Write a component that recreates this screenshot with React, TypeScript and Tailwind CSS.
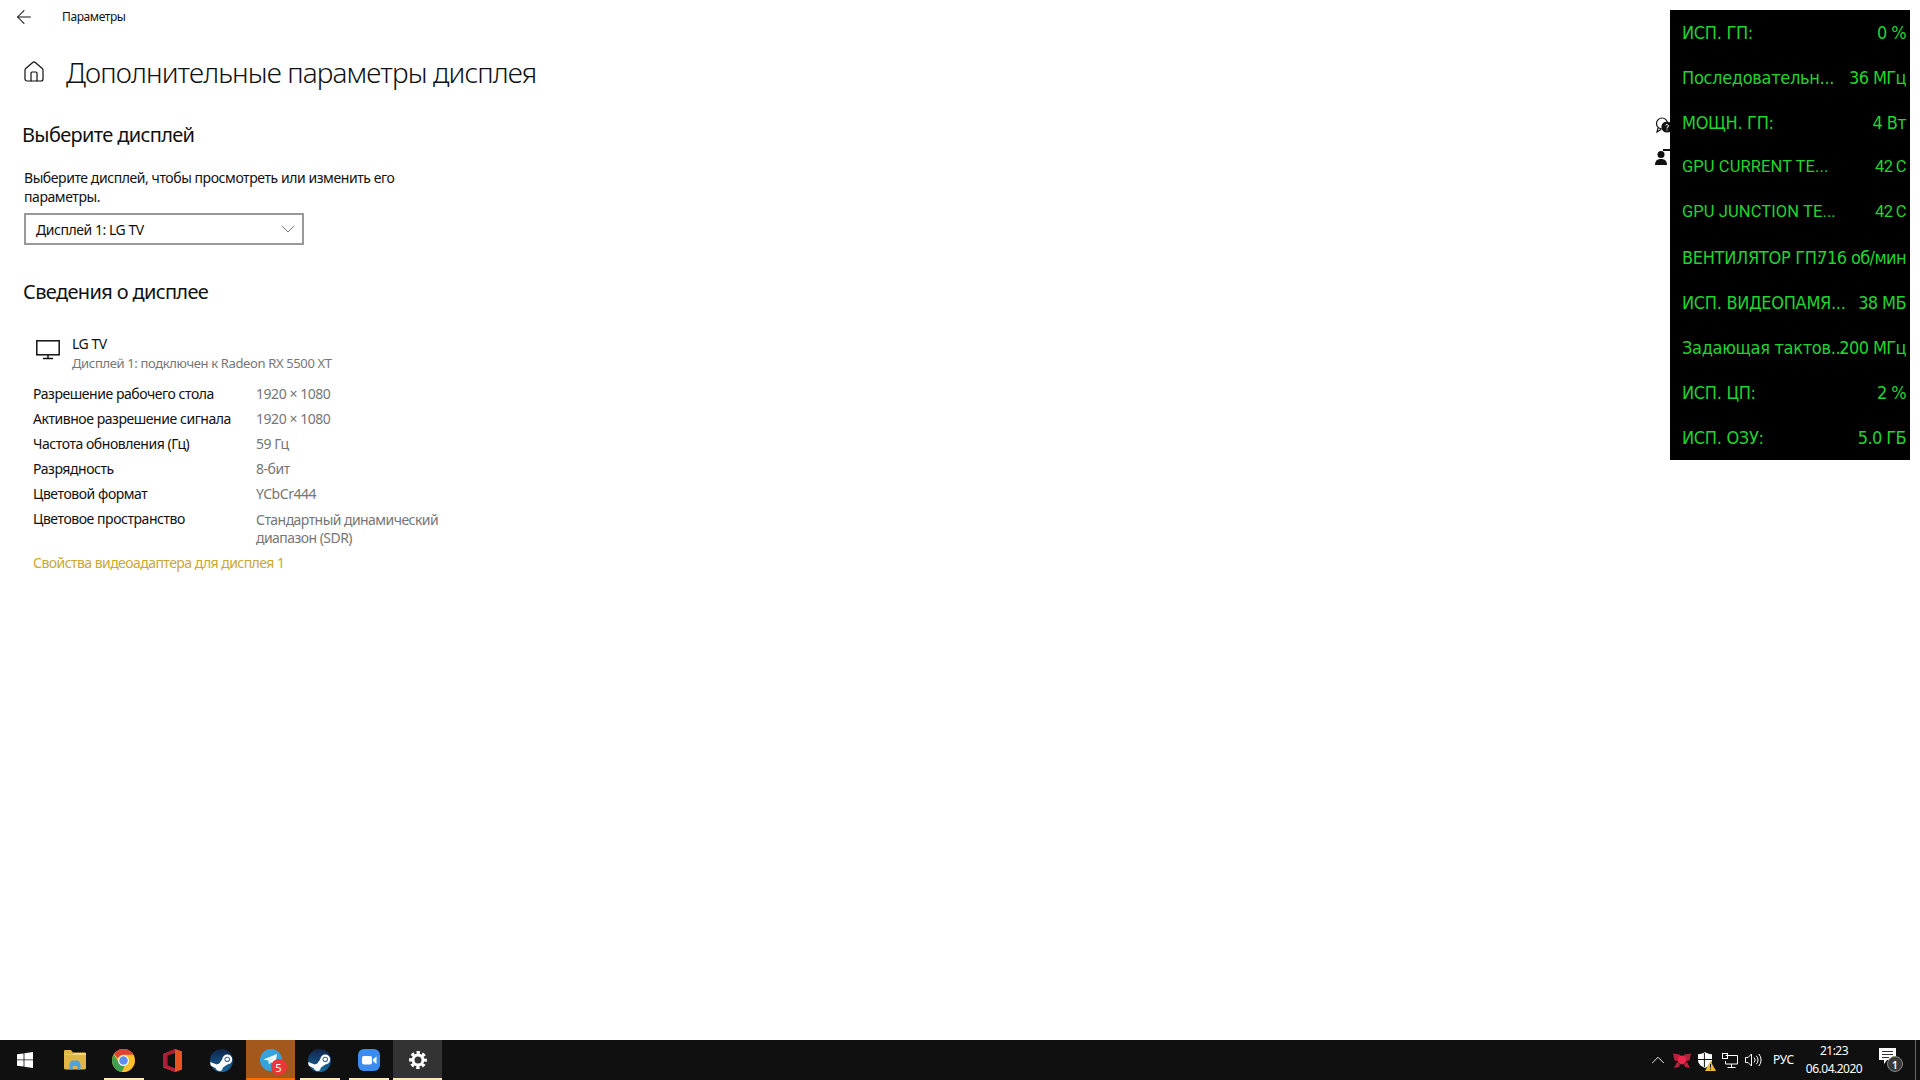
import React from 'react';
import { ArrowLeft, ChevronDown, ChevronUp, Home } from 'lucide-react';

const displayRows: [string, string][] = [
  ['Разрешение рабочего стола', '1920 × 1080'],
  ['Активное разрешение сигнала', '1920 × 1080'],
  ['Частота обновления (Гц)', '59 Гц'],
  ['Разрядность', '8-бит'],
  ['Цветовой формат', 'YCbCr444'],
];

const overlayRows: [string, string, boolean?][] = [
  ['ИСП. ГП:', '0 %'],
  ['Последовательн...', '36 МГц'],
  ['МОЩН. ГП:', '4 Вт'],
  ['GPU CURRENT TE...', '42 C', true],
  ['GPU JUNCTION TE...', '42 C', true],
  ['ВЕНТИЛЯТОР ГП:', '716 об/мин'],
  ['ИСП. ВИДЕОПАМЯ...', '38 МБ'],
  ['Задающая тактов...', '200 МГц'],
  ['ИСП. ЦП:', '2 %'],
  ['ИСП. ОЗУ:', '5.0 ГБ'],
];

const WindowsLogo = () => (
  <svg width="16" height="16" viewBox="0 0 16 16" fill="#fff">
    <path d="M0 2.300 6.600 1.400V7.500H0zM7.400 1.300 16 0V7.500H7.400zM0 8.300H6.600V14.600L0 13.700zM7.400 8.300H16V16L7.400 14.800z" />
  </svg>
);

const FolderIcon = () => (
  <svg width="22" height="20" viewBox="0 0 22 20">
    <path d="M0 1.500C0 .7.500 0 1.300 0H7l2 2.500h11.700c.7 0 1.300.6 1.300 1.300V18c0 .8-.6 1.400-1.400 1.400H1.300C.6 19.400 0 18.800 0 18z" fill="#e3b544" />
    <path d="M0 4.500h8.500L10 3h12v2H0z" fill="#f7d774" />
    <path d="M5.500 15.500c0-2.500 1.500-5 3-5h5c1.500 0 3 2.500 3 5v4h-3.200v-3.500H8.700V19.500H5.500z" fill="#4ba3e3" />
  </svg>
);

const ChromeIcon = () => (
  <svg width="23" height="23" viewBox="0 0 24 24">
    <circle cx="12" cy="12" r="12" fill="#fbc02d" />
    <path d="M12 0a12 12 0 0 1 10.400 6H12a6 6 0 0 0-5.700 4L2.100 5.200A12 12 0 0 1 12 0z" fill="#db4437" />
    <path d="M1.800 5.700 7 13.800a6 6 0 0 0 6.200 4.100L10.100 23.900A12 12 0 0 1 1.800 5.700z" fill="#3f9f51" />
    <circle cx="12" cy="12" r="5.600" fill="#fff" />
    <circle cx="12" cy="12" r="4.500" fill="#5b8ff0" />
  </svg>
);

const OfficeIcon = () => (
  <svg width="20" height="23" viewBox="0 0 20 23">
    <path d="M0 5 12 0l7 2.500v18L12 23 0 18.500z" fill="#c7341a" />
    <path d="M12 0l7 2.500v18L12 23z" fill="#e8541d" />
    <path d="M0 5l12-5v3.500L4.500 6.500v10L0 18.500z" fill="#a81e3a" />
    <path d="M4.500 6.500 12 4v15.500l-7.500-3z" fill="#0f0f0f" />
    <path d="M0 18.500 12 23v-3.500l-7.500-3z" fill="#b3223c" />
  </svg>
);

const SteamIcon = () => (
  <svg width="23" height="23" viewBox="0 0 24 24">
    <defs>
      <linearGradient id="steamFill" x1="0" y1="0" x2="0" y2="1">
        <stop offset="0" stopColor="#11244a" />
        <stop offset="1" stopColor="#1569a0" />
      </linearGradient>
    </defs>
    <circle cx="12" cy="12" r="12" fill="url(#steamFill)" />
    <path d="M.2 13.500 7 16.300a4 4 0 0 1 2.500-.8l3.300-4.700a5.200 5.200 0 1 1 5.300 5.300l-4.800 3.400a3.700 3.700 0 0 1-7.300.7L.9 17.500A12 12 0 0 1 .2 13.500z" fill="#fff" />
    <circle cx="18" cy="10.800" r="2.800" fill="#1a3f6d" />
    <circle cx="18" cy="10.800" r="1.900" fill="#fff" />
  </svg>
);

const TelegramIcon = () => (
  <div className="relative h-[22px] w-[22px]">
    <svg width="22" height="22" viewBox="0 0 22 22">
      <circle cx="11" cy="11" r="11" fill="#36a3dc" />
      <path d="M3.500 10.500 17 5l-2 11-4-2.800-2 2-.6-3.800z" fill="#fff" />
      <path d="M8.400 11.400 15 7l-5.200 5.200L9 15.200z" fill="#c4dff0" />
    </svg>
    <span className="absolute -bottom-[4px] -right-[5px] flex h-[16px] w-[16px] items-center justify-center rounded-full bg-[#e8383a] text-[11px] leading-none text-white">5</span>
  </div>
);

const ZoomIcon = () => (
  <svg width="22" height="22" viewBox="0 0 22 22">
    <rect width="22" height="22" rx="6" fill="#3b8cf0" />
    <rect x="4" y="7" width="10" height="8.500" rx="2" fill="#fff" />
    <path d="M15 10.200 18.500 7.500v7.500L15 12.300z" fill="#fff" />
  </svg>
);

const GearIcon = () => (
  <svg width="18" height="18" viewBox="0 0 18 18" fill="none" stroke="#fff">
    <circle cx="9" cy="9" r="5" strokeWidth="3" />
    <circle cx="9" cy="9" r="7.400" strokeWidth="3" strokeDasharray="3.300 2.510" strokeDashoffset="1.650" />
  </svg>
);

const MonitorIcon = () => (
  <svg width="24" height="20" viewBox="0 0 24 20" fill="none" stroke="#111" strokeWidth="1.500">
    <rect x=".8" y=".8" width="22.400" height="14" />
    <path d="M12 15V18.500M7 18.500h10" />
  </svg>
);

const FeedbackIcons = () => (
  <div className="absolute left-[1655px] top-[117px] flex flex-col gap-[15px]">
    <svg width="18" height="17" viewBox="0 0 18 17" fill="none" stroke="#111" strokeWidth="1.200">
      <circle cx="7" cy="6.500" r="5.500" />
      <path d="M3 11 2 15l4-2.500" />
      <circle cx="12" cy="10" r="5" fill="#111" />
      <path d="M10.500 8.500a1.500 1.500 0 1 1 1.500 2v1M12 12.500v1" stroke="#fff" strokeWidth="1" />
    </svg>
    <svg width="18" height="17" viewBox="0 0 18 17" fill="#111">
      <circle cx="6" cy="5.500" r="3.500" />
      <path d="M0 16c0-4 2-6 6-6s6 2 6 6z" />
      <rect x="8" y="0" width="10" height="2" />
    </svg>
  </div>
);

const StarTray = () => (
  <svg width="18" height="17" viewBox="0 0 18 17" fill="#b8213c">
    <path d="M0 1.500 6.500 2.500 9 6l-3 3-4.500-.500zM18 1.500 11.500 2.500 9 6l3 3 4.500-.500zM1 16l3-6 3 2-1 3zM17 16l-3-6-3 2 1 3z" />
    <circle cx="9" cy="8" r="4.400" fill="#e8274b" />
  </svg>
);

const ShieldTray = () => (
  <div className="relative h-[17px] w-[17px]">
    <svg width="14" height="16" viewBox="0 0 14 16" fill="#fff">
      <path d="M7 0C5 1.500 3 2 0 2.200V8c0 3.500 3 6.500 7 8 4-1.500 7-4.500 7-8V2.200C11 2 9 1.500 7 0z" />
      <path d="M6.400 1v14M0 7.500h14" stroke="#101010" strokeWidth="1" />
    </svg>
    <svg className="absolute -bottom-[2px] -right-[1px]" width="11" height="10" viewBox="0 0 11 10">
      <path d="M5.500 0 11 10H0z" fill="#f5b82e" />
      <path d="M5.500 3v3.500M5.500 7.500v1.200" stroke="#101010" strokeWidth="1" />
    </svg>
  </div>
);

const NetworkTray = () => (
  <svg width="16" height="15" viewBox="0 0 16 15" fill="none" stroke="#fff" strokeWidth="1">
    <path d="M3.500 2.500H15.500V11H3.500V8" />
    <path d="M9.500 11V14M5.500 14.500h8" />
    <rect x=".5" y=".5" width="5" height="5" />
  </svg>
);

const VolumeTray = () => (
  <svg width="17" height="14" viewBox="0 0 17 14" fill="none" stroke="#fff" strokeWidth="1">
    <path d="M.5 4.500h2.500L6.500 1v12L3 9.500H.5z" />
    <path d="M9 4.500a3.500 3.500 0 0 1 0 5M11.300 2.800a6 6 0 0 1 0 8.400M13.800 1a9 9 0 0 1 0 12" />
  </svg>
);

const TaskButton = ({ children, className, underline }: { children: React.ReactNode; className?: string; underline?: string }) => (
  <div className={`relative flex h-10 items-center justify-center ${className ?? 'w-[49px]'}`}>
    {children}
    {underline && <div className={`absolute bottom-0 h-[2px] ${underline}`} />}
  </div>
);

const App: React.FC = () => {
  return (
    <div className="relative flex h-screen w-full flex-col overflow-hidden bg-white font-['Noto_Sans',sans-serif] text-[#111]">
      <main className="flex-1">
        {/* Title bar */}
        <div className="flex h-[34px] items-center pl-[13px]">
          <ArrowLeft size={22} strokeWidth={1.1} />
          <span className="ml-[27px] text-[12px] tracking-[-0.4px]">Параметры</span>
        </div>

        <div className="mt-[18px] flex h-[40px] items-center pl-[22px]">
          <Home size={24} strokeWidth={1.2} />
          <h1 className="ml-[20px] text-[28px] font-light leading-none tracking-[-0.88px]">Дополнительные параметры дисплея</h1>
        </div>

        <section className="mt-[29px] pl-[22px]">
          <h2 className="h-[28px] text-[20px] leading-[28px] tracking-[-0.65px]">Выберите дисплей</h2>
          <div className="ml-[2px]">
            <p className="mt-[20px] w-[380px] text-[14px] leading-[18.5px] tracking-[-0.43px]">
              Выберите дисплей, чтобы просмотреть или изменить его параметры.
            </p>
            <div className="mt-[7px] flex h-[32px] w-[280px] items-center justify-between border-2 border-[#999] pl-[10px] pr-[2px] text-[14px] tracking-[-0.45px]">
              <span>Дисплей 1: LG TV</span>
              <ChevronDown size={24} strokeWidth={0.8} className="text-[#555]" />
            </div>
          </div>

          <h2 className="ml-[1px] mt-[33px] h-[28px] text-[20px] leading-[28px] tracking-[-0.65px]">Сведения о дисплее</h2>
        </section>

        <section className="mt-[28px] pl-[33px]">
          <div className="flex">
            <div className="ml-[3px] pt-[6px]">
              <MonitorIcon />
            </div>
            <div className="ml-[12px]">
              <div className="h-[19px] text-[14px] leading-[20px] tracking-[-0.45px]">LG TV</div>
              <div className="text-[13px] leading-[20px] tracking-[-0.36px] text-[#767676]">Дисплей 1: подключен к Radeon RX 5500 XT</div>
            </div>
          </div>

          <div className="mt-[8px] flex flex-col">
            {displayRows.map(([label, value]) => (
              <div key={label} className="flex h-[25px] items-center text-[14px] tracking-[-0.45px]">
                <span className="w-[223px] shrink-0">{label}</span>
                <span className="text-[#767676]">{value}</span>
              </div>
            ))}
            <div className="flex text-[14px] tracking-[-0.45px]">
              <span className="w-[223px] shrink-0 leading-[25px]">Цветовое пространство</span>
              <span className="w-[200px] pt-[5px] leading-[18px] tracking-[-0.55px] text-[#767676]">Стандартный динамический диапазон (SDR)</span>
            </div>
          </div>

          <a className="mt-[6px] block text-[14px] leading-[20px] tracking-[-0.55px] text-[#c9a832]">Свойства видеоадаптера для дисплея 1</a>
        </section>
      </main>

      {/* Performance overlay */}
      <FeedbackIcons />
      <div className="absolute left-[1670px] top-[10px] flex h-[450px] w-[240px] flex-col bg-black pl-[12px] pr-[4px] font-['DejaVu_Sans_Condensed','DejaVu_Sans',sans-serif] text-[18px] tracking-[-0.3px] text-[#21d42f]">
        {overlayRows.map(([label, value, latin]) => (
          <div key={label} className="flex h-[45px] items-center">
            <span className={`min-w-0 flex-1 whitespace-nowrap ${latin ? "font-['Roboto',sans-serif] text-[16.5px] tracking-[0.1px]" : ''}`}>{label}</span>
            <span className={`shrink-0 tracking-[-0.6px] ${latin ? "font-['Roboto',sans-serif] text-[16.5px]" : ''}`}>{value}</span>
          </div>
        ))}
      </div>

      {/* Taskbar */}
      <footer className="flex h-10 shrink-0 items-center bg-[#101010] text-white">
        <TaskButton className="w-[50px] pr-[1px]"><WindowsLogo /></TaskButton>
        <TaskButton><FolderIcon /></TaskButton>
        <TaskButton underline="w-[40px] bg-[#ffe9bd]"><ChromeIcon /></TaskButton>
        <TaskButton><OfficeIcon /></TaskButton>
        <TaskButton><SteamIcon /></TaskButton>
        <TaskButton className="w-[49px] bg-[#a4591c]" underline="w-full bg-[#f76d02]"><TelegramIcon /></TaskButton>
        <TaskButton underline="w-[40px] bg-[#ffe9bd]"><SteamIcon /></TaskButton>
        <TaskButton underline="w-[40px] bg-[#ffe9bd]"><ZoomIcon /></TaskButton>
        <TaskButton className="w-[49px] bg-[#333333]" underline="w-full bg-[#ffe9bd]"><GearIcon /></TaskButton>

        <div className="ml-auto flex h-full items-center">
          <ChevronUp size={22} strokeWidth={1} className="mr-[4px]" />
          <div className="mr-[7px]"><StarTray /></div>
          <div className="mr-[7px]"><ShieldTray /></div>
          <div className="mr-[7px]"><NetworkTray /></div>
          <div className="mr-[11px]"><VolumeTray /></div>
          <span className="mr-[12px] text-[12px] tracking-[-0.2px]">РУС</span>
          <div className="mr-[17px] flex w-[56px] flex-col items-center text-[12px] leading-[18px] tracking-[-0.5px]">
            <span>21:23</span>
            <span>06.04.2020</span>
          </div>
          <div className="relative mr-[12px] h-[24px] w-[24px]">
            <svg width="17" height="16" viewBox="0 0 17 16">
              <path d="M0 0h17v12H8l-3 4v-4H0z" fill="#fff" />
              <path d="M3 3.500h11M3 6.500h11M3 9.500h7" stroke="#333" strokeWidth="1" />
            </svg>
            <span className="absolute bottom-0 right-0 flex h-[16px] w-[16px] items-center justify-center rounded-full border border-[#888] bg-[#3a3a3a] text-[11px] font-semibold leading-none">1</span>
          </div>
          <div className="h-full w-[5px] border-l border-[#666]" />
        </div>
      </footer>
    </div>
  );
};

export default App;
